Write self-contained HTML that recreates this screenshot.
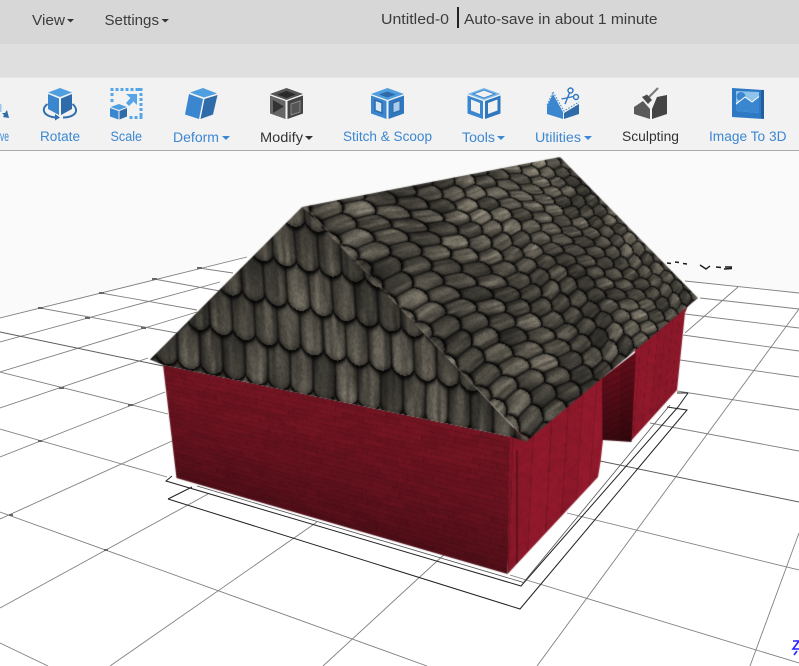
<!DOCTYPE html>
<html><head><meta charset="utf-8"><title>Untitled-0</title>
<style>
html,body{margin:0;padding:0;background:#fff;width:799px;height:666px;overflow:hidden}
#s,#c{position:absolute;left:0;top:0;width:799px;height:666px;display:block}
text{font-family:"Liberation Sans",sans-serif}
.m{font-size:14.5px;fill:#3c3c3c}
.t{font-size:13.5px;fill:#3c87d2}
.k{font-size:13.5px;fill:#333}
.g{stroke:#808080;stroke-width:.9;fill:none}
.d{stroke:#5c5c5c;stroke-width:1;fill:none}
.w{stroke:#222;stroke-width:1;fill:none}
</style></head><body>
<svg id="s" width="799" height="666" viewBox="0 0 799 666" xmlns="http://www.w3.org/2000/svg">
<rect width="799" height="666" fill="#fff"/>
<rect y="151" width="799" height="515" fill="#fafafa"/>
<polygon points="0,318 311,241 685,281 799,293 799,666 0,666" fill="#fff"/>
<!-- grid -->
<g class="g">
<path d="M0 318L247 257M0 342L220 282M0 372L197 312M0 408L148 358M0 457L165 392M0 519L172 441M0 608L208 494M110 666L317 522M323 666L460 540"/>
<path d="M40 308L177 333M101 293L197 310M154 279L220 291M199 268L233 273M0 372L168 414"/>
<path d="M0 429L167 477M0 512L427 666M0 643L48 666"/>
<path d="M685 281L799 293M700 298L799 309M685 314L799 328M683 335L799 351M680 360L799 377M677 391L799 410M650 423L799 451"/>
<path d="M738 287L685 333M799 309L537 666M799 533L750 666"/>
<path d="M567 513L799 570M510 575L799 663"/>
</g>
<path class="d" d="M0 332L163 366M600 461L799 502"/>
<!-- grid crossings -->
<g fill="#666"><rect x="38" y="307" width="5" height="2"/><rect x="99" y="292" width="5" height="2"/><rect x="152" y="278" width="5" height="2"/><rect x="197" y="267" width="5" height="2"/><rect x="85" y="317" width="5" height="2"/><rect x="141" y="327" width="5" height="2"/><rect x="59" y="387" width="5" height="2"/><rect x="128" y="404" width="5" height="2"/><rect x="38" y="440" width="4" height="2"/><rect x="9" y="514" width="4" height="2"/><rect x="104" y="549" width="4" height="2"/></g>
<!-- wire footprint -->
<path class="w" d="M172 476L166 481L521 586L678 407M168 499L192 487M168 499L520 609L687 410L667 407M688 393L677 393M688 393L678 407"/>
<path d="M197 486L522 582L523 583L670 405" stroke="#555" stroke-width=".8" fill="none"/>
<!-- axis label -->
<g stroke="#1a1a1a" stroke-width="1.4" fill="none"><path d="M667 263l4 .5M675 262l4 .5M683 263.5l4 .5"/><path d="M700 265l6 4l4-3M716 267l5 .5M724 269l8-.5M725 267l7 0"/></g>
<path d="M793 641h6M799 641l-6 8h6M797 651l-3 4" stroke="#2222ff" stroke-width="1.6" fill="none"/>

<!-- chrome -->
<rect width="799" height="44.3" fill="#d7d7d7"/>
<rect y="44.3" width="799" height="33.4" fill="#dfdfdf"/>
<rect y="77.7" width="799" height="72.3" fill="#f2f2f2"/>
<rect y="150" width="799" height="1" fill="#a9a9a9"/>
<text class="m" x="32" y="25" textLength="33" lengthAdjust="spacingAndGlyphs">View</text>
<polygon points="67,19 74,19 70.5,22.5" fill="#333"/>
<text class="m" x="104.500" y="25" textLength="54.500" lengthAdjust="spacingAndGlyphs">Settings</text>
<polygon points="161.500,19 169,19 165.200,22.500" fill="#333"/>
<text class="m" x="381" y="24" textLength="68" lengthAdjust="spacingAndGlyphs">Untitled-0</text>
<rect x="457" y="7" width="2" height="21" fill="#222"/>
<text class="m" x="464" y="24" textLength="193.500" lengthAdjust="spacingAndGlyphs">Auto-save in about 1 minute</text>

<text class="t" x="0" y="141" textLength="9" lengthAdjust="spacingAndGlyphs">ve</text>
<text class="t" x="40" y="141" textLength="40" lengthAdjust="spacingAndGlyphs">Rotate</text>
<text class="t" x="110.500" y="141" textLength="31.500" lengthAdjust="spacingAndGlyphs">Scale</text>
<text class="t" x="173" y="142" textLength="46" lengthAdjust="spacingAndGlyphs">Deform</text>
<polygon points="222,136 230,136 226,140" fill="#3c87d2"/>
<text class="k" x="260" y="142" textLength="43" lengthAdjust="spacingAndGlyphs">Modify</text>
<polygon points="305,136 313,136 309,140" fill="#333"/>
<text class="t" x="343" y="141" textLength="89" lengthAdjust="spacingAndGlyphs">Stitch &amp; Scoop</text>
<text class="t" x="462" y="142" textLength="33" lengthAdjust="spacingAndGlyphs">Tools</text>
<polygon points="497,136 505,136 501,140" fill="#3c87d2"/>
<text class="t" x="535" y="142" textLength="46" lengthAdjust="spacingAndGlyphs">Utilities</text>
<polygon points="584,136 592,136 588,140" fill="#3c87d2"/>
<text class="k" x="622" y="141" textLength="57" lengthAdjust="spacingAndGlyphs">Sculpting</text>
<text class="t" x="709" y="141" textLength="77.500" lengthAdjust="spacingAndGlyphs">Image To 3D</text>

<!-- move fragment -->
<path d="M0 104h1.500v8H0z" fill="#9cc6ea"/><path d="M2 113l3 0l2-3l2 8l-6-1l1-2z" fill="#2f6ba8"/>
<!-- rotate -->
<polygon points="60,88 48,92.500 60,97 72,92.500" fill="#4f9fe0"/>
<polygon points="48,94 59,98.500 59,115 48,109" fill="#3a87d0"/>
<polygon points="61,98.500 72,94 72,109 61,115" fill="#2f6ba8"/>
<path d="M47.500 104C42 108 43 113 48 115.500C51 117 54 117.500 57 117.500M63 117.500C70 117.500 75 115 76 111.500C76.500 109 75 106 72.500 104" fill="none" stroke="#2f6fb0" stroke-width="2"/>
<polygon points="55,114 60,117.500 55,120.500" fill="#2f6fb0"/>
<!-- scale -->
<g fill="#55a5e8"><rect x="110.500" y="88" width="3" height="3"/><rect x="115.500" y="88" width="3" height="3"/><rect x="120.500" y="88" width="3" height="3"/><rect x="125.500" y="88" width="3" height="3"/><rect x="130.500" y="88" width="3" height="3"/><rect x="135.500" y="88" width="7" height="3"/><rect x="110.500" y="93" width="3" height="3"/><rect x="110.500" y="99" width="3" height="3"/><rect x="139.500" y="93" width="3" height="3"/><rect x="139.500" y="98" width="3" height="3"/><rect x="139.500" y="103" width="3" height="3"/><rect x="139.500" y="108" width="3" height="3"/><rect x="139.500" y="113" width="3" height="6"/><rect x="129.500" y="116" width="3" height="3"/><rect x="134.500" y="116" width="3" height="3"/>
<polygon points="126,94 137,94 137,105 133.500,101.500 129,106 126,103 130.500,98"/></g>
<polygon points="119,104 110.500,107 119,110 127,107" fill="#4f9fe0"/>
<polygon points="110,108 118.500,111 118.500,119.500 110,116.500" fill="#3a87d0"/>
<polygon points="119.500,111 127,108 127,116.500 119.500,119.500" fill="#2f6ba8"/>
<!-- deform -->
<polygon points="203,88 190,92.500 204,97.500 217,93.500" fill="#4f9fe0"/>
<polygon points="189,94 203,99 199,119 185,114.500" fill="#3a87d0"/>
<polygon points="204.500,99 217.500,95 213,114.500 200.500,119" fill="#2f6ba8"/>
<!-- modify -->
<polygon points="286.500,88 270,94 286.500,100 303,94" fill="#555"/>
<polygon points="286.500,91 277,94.500 286.500,98 296,94.500" fill="#2a2a2a"/>
<polygon points="270,95.500 285.500,101 285.500,119 270,113.500" fill="#666"/>
<polygon points="273,100 284,106.500 273,113" fill="#333"/>
<polygon points="287.500,101 303,95.500 303,113.500 287.500,119" fill="#444"/>
<polygon points="291,104 300,101 300,112 291,115" fill="#555" stroke="#888" stroke-width="1"/>
<!-- stitch -->
<polygon points="387.500,88 371,94 387.500,100 404,94" fill="#4f9fe0"/>
<polygon points="387.500,91.500 379,94.500 387.500,97.500 396,94.500" fill="#2f6ba8"/>
<polygon points="371,95.500 386.500,101 386.500,119 371,113.500" fill="#3a87d0"/>
<polygon points="375,100 382,102.500 382,113 375,110.500" fill="#d8e8f6" stroke="#2f6ba8" stroke-width="1.500"/>
<polygon points="388.500,101 404,95.500 404,113.500 388.500,119" fill="#2f78c0"/>
<polygon points="393,103 400,100.500 400,110.500 393,113" fill="#a8cdec" stroke="#2f6ba8"/>
<!-- tools -->
<polygon points="484,88 467.500,94 484,100 500.500,94" fill="#7db8ea"/>
<polygon points="484,90 473,94 484,98 495,94" fill="#f2f2f2" stroke="#3a87d0" stroke-width="1"/>
<polygon points="467.500,95.500 483,101 483,119 467.500,113.500" fill="#3a87d0"/>
<polygon points="471,99.500 480,103 480,114 471,110.500" fill="#f2f2f2"/>
<polygon points="485,101 500.500,95.500 500.500,113.500 485,119" fill="#2f78c0"/>
<polygon points="488,103 497.500,99.500 497.500,110.500 488,114" fill="#f2f2f2"/>
<!-- utilities -->
<polygon points="547,106 553,94 563,112 563,119 547,114" fill="#3a87d0"/>
<polygon points="564,113 579,104 579,114 564,119" fill="#2f6ba8"/>
<path d="M553 92L564 111L579 102" fill="none" stroke="#3a87d0" stroke-width="1" stroke-dasharray="1.500 1.500"/>
<path d="M547 105L553 92" fill="none" stroke="#3a87d0" stroke-width="1" stroke-dasharray="1.500 1.500"/>
<g fill="none" stroke="#2f78c0" stroke-width="1.400"><circle cx="570.500" cy="90.500" r="2.500"/><circle cx="576" cy="97" r="2.500"/><path d="M569.500 93L565 104M573.500 96.500L561.500 99"/></g>
<!-- sculpting -->
<path d="M658 88L648 98" stroke="#7a7a7a" stroke-width="2.200" fill="none"/>
<polygon points="642,97 647,94.500 652,100 648,104" fill="#4a4a4a"/>
<polygon points="634,107 643,101 650,109 650,119 634,114" fill="#5a5a5a"/>
<polygon points="652,109 657,97 667,95 667,114 652,119" fill="#444"/>
<!-- image to 3d -->
<polygon points="732,88 764,90 764,119 732,117" fill="#2f78c4"/>
<polygon points="736,91 759,92 759,113 736,111" fill="#8fc3ea"/>
<circle cx="741" cy="96.500" r="4.500" fill="#3a87d0"/>
<polygon points="736,105 745,97 752,102 759,97 759,113 736,111" fill="#3a87d0"/>
<path d="M736 104L745 97L752 102L759 96.500" fill="none" stroke="#fff" stroke-width="1"/>
<polygon points="761,90 764,90 764,119 761,118" fill="#235f9e"/>
</svg>
<canvas id="c" width="799" height="666"></canvas>
<script>
(function(){
var cv=document.getElementById('c'),ctx=cv.getContext('2d');
function h2(x,y){var s=Math.sin(x*127.1+y*311.7)*43758.5453;return s-Math.floor(s)}
function vn(x,y){var i=Math.floor(x),j=Math.floor(y),f=x-i,g=y-j;f=f*f*(3-2*f);g=g*g*(3-2*g);
 var a=h2(i,j),b=h2(i+1,j),c=h2(i,j+1),d=h2(i+1,j+1);return a+(b-a)*f+(c-a)*g+(a-b-c+d)*f*g}
function inv(q){var x0=q[0][0],y0=q[0][1],x1=q[1][0],y1=q[1][1],x2=q[2][0],y2=q[2][1],x3=q[3][0],y3=q[3][1];
 var dx1=x1-x2,dx2=x3-x2,sx=x0-x1+x2-x3,dy1=y1-y2,dy2=y3-y2,sy=y0-y1+y2-y3,den=dx1*dy2-dx2*dy1;
 var g=(sx*dy2-dx2*sy)/den,h=(dx1*sy-sx*dy1)/den;
 var a=x1-x0+g*x1,b=x3-x0+h*x3,c=x0,d=y1-y0+g*y1,e=y3-y0+h*y3,f=y0;
 var A=e-f*h,B=c*h-b,C=b*f-c*e,D=f*g-d,E=a-c*g,F=c*d-a*f,G=d*h-e*g,Hh=b*g-a*h,I=a*e-b*d;
 return function(x,y){var w=G*x+Hh*y+I;return [(A*x+B*y+C)/w,(D*x+E*y+F)/w]}}
function layer(poly,fn,bl){
 var minx=1e9,miny=1e9,maxx=-1e9,maxy=-1e9,i;
 for(i=0;i<poly.length;i++){minx=Math.min(minx,poly[i][0]);miny=Math.min(miny,poly[i][1]);maxx=Math.max(maxx,poly[i][0]);maxy=Math.max(maxy,poly[i][1])}
 minx=Math.floor(minx)-2;miny=Math.floor(miny)-2;maxx=Math.ceil(maxx)+2;maxy=Math.ceil(maxy)+2;
 var w=maxx-minx,h=maxy-miny,o=document.createElement('canvas');o.width=w;o.height=h;
 var oc=o.getContext('2d'),im=oc.createImageData(w,h),dt=im.data,x,y,p=0;
 for(y=0;y<h;y++)for(x=0;x<w;x++){var c=fn(x+minx+.5,y+miny+.5);dt[p++]=c[0];dt[p++]=c[1];dt[p++]=c[2];dt[p++]=255}
 oc.putImageData(im,0,0);
 var o2=document.createElement('canvas');o2.width=w;o2.height=h;var c2=o2.getContext('2d');
 try{c2.filter='blur('+(bl||.6)+'px)'}catch(e){}
 c2.drawImage(o,0,0);try{c2.filter='none'}catch(e){}
 ctx.save();ctx.beginPath();ctx.moveTo(poly[0][0],poly[0][1]);
 for(i=1;i<poly.length;i++)ctx.lineTo(poly[i][0],poly[i][1]);
 ctx.closePath();ctx.clip();ctx.drawImage(o2,minx,miny);ctx.restore();
}
function tile(s,t,A,sh,warm,gain){
 function e(x){return A*Math.pow(Math.abs(Math.sin(Math.PI*x)),.7)}
 var r=Math.floor(t);
 if(t<r+e(s+(r-1)*.5))r=r-1;
 var x=s+r*.5,id=Math.floor(x),fx=x-id;
 var ds=t-(r+e(s+(r-1)*.5));
 var tip=r+1+e(x)-t;
 var rnd=h2(id*1.3+.7,r*2.1+.3);
 var b=.3+.2*rnd;
 var cyl=.66+.46*Math.pow(Math.sin(Math.PI*fx),.8);
 var end=.84+.3*Math.min(1,(t-r)/1.1);
 var streak=vn(x*6+rnd*9,t*1.3+rnd*5),grain=vn(s*22,t*20);
 var c=b*cyl*end*(.72+.56*streak)*(.86+.28*grain)*gain;
 var seam=Math.min(fx,1-fx);
 c*=1-.5*Math.exp(-Math.pow(seam/.06,2));
 c*=1-.96*Math.exp(-Math.pow(ds/sh,2));
 c*=1-.3*Math.exp(-Math.pow(tip/.09,2));
 var v=c*255;
 return [Math.min(255,v*1.03+4),Math.min(255,v*.98+4),Math.min(255,v*warm+4)];
}
/* front wall */
var fq=[[163,365],[512,437],[508,574],[176,478]],fi=inv(fq);
layer([[163,365],[512,437],[507.5,574],[176.5,478]],function(x,y){
 var q=fi(x,y),u=q[0],v=q[1];
 var row=Math.floor(v*25),fv=v*25-row;
 var bu=u*17+(row%2)*.5+h2(row,3)*.4,fu=bu-Math.floor(bu);
 var base=1-.3*Math.pow(Math.max(0,v),1.6);
 var br=.95+.1*h2(Math.floor(bu),row);
 var m=1;
 if(fv<.14)m*=.88;
 if(fu<.02)m*=.88;
 var n=.96+.08*vn(x*.25,y*.25);
 var k=base*br*m*n;
 return [112*k,20*k,33*k];
});
/* right wall */
var rq=[[512,437],[685,313],[677,390],[507,574]],ri=inv(rq);
function rw(x,y){
 var q=ri(x,y),u=q[0],v=q[1];
 var col=Math.floor(u*15),fu=u*15-col;
 var k=.96+.08*h2(col,7);
 if(fu<.08)k*=.86;
 var bv=v*16+(col%2)*.5,fv=bv-Math.floor(bv);
 if(fv<.05)k*=.92;
 if(x>516&&x<518.5&&y>450)k*=.72;
 k*=.96+.08*vn(x*.2,y*.2);
 return [140*k,24*k,42*k];
}
layer([[510,430],[604,366],[603,440],[600.5,462],[598,477],[507.5,574]],rw);
layer([[635,350],[692,296],[685,313],[677,390],[630,442]],rw);
/* inner opening */
layer([[602,378],[636,352],[631.5,442],[602.5,440]],function(x,y){
 var t=(y-370)/72,k=1-.45*t;
 var row=Math.floor((y+ (x-602)*.45)/6.5);
 if(((y+(x-602)*.45)/6.5-row)<.16)k*=.86;
 if(x>620)k*=.9;
 return [100*k,14*k,26*k];
});
/* gable */
layer([[302,207],[150,359.5],[163,365],[512,437],[527,442],[310,212]],function(x,y){
 var s=(x-150)/22.5+.25*Math.sin(y*.012);
 var t=(y-(255+.225*(x-273)))/41.5;
 return tile(s,t,.2,.1,.87,.62);
},.7);
/* main roof */
var mq=[[302,207],[560,157],[698,298],[527,441]],mi=inv(mq);
layer(mq,function(x,y){
 var q=mi(x,y),u=q[0],v=q[1];
 var s=v*15+.25*Math.sin(u*14),t=u*13.5+.12*Math.sin(v*20);
 var low=.72+.5*vn(x*.022+3,y*.022+1);
 if(u<.2&&v<.25)low*=1.12;
 if(u<.35&&v>.75)low*=1.12;
 return tile(s,t,.22,.12,.87,.68*low);
},.6);
/* lit overhang edge */
ctx.strokeStyle='rgba(140,132,115,.3)';ctx.lineWidth=1.4;ctx.beginPath();ctx.moveTo(306,208);ctx.lineTo(527,441);ctx.stroke();
})();
</script>
</body></html>
